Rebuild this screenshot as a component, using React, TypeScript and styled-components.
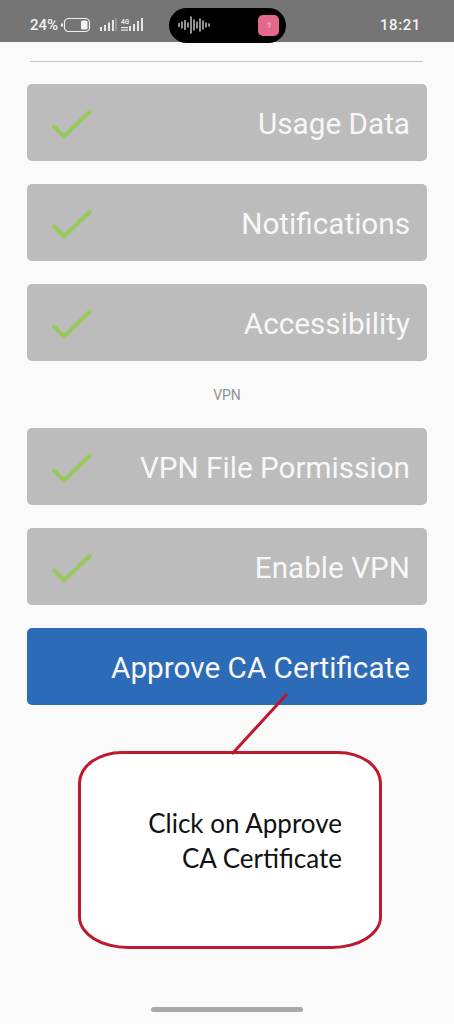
import React from 'react';
import styled, { createGlobalStyle } from 'styled-components';

const GlobalStyle = createGlobalStyle`
  html, body {
    margin: 0;
    padding: 0;
    background: #fafafa;
  }
`

const Page = styled.div`
  position: relative;
  width: 454px;
  height: 1024px;
  overflow: hidden;
  background: #fafafa;
  font-family: Roboto, "Liberation Sans", sans-serif;
`

const StatusBar = styled.div`
  box-sizing: border-box;
  height: 42px;
  background: #757575;
  display: flex;
  align-items: center;
  padding: 8px 33px 0 30px;
  color: #f2f2f2;
`

const BatteryText = styled.span`
  font-size: 15px;
  font-weight: 500;
  width: 30px;
`

const StatusIcons = styled.svg`
  display: block;
  flex: none;
`

const Island = styled.div`
  box-sizing: border-box;
  flex: none;
  width: 117px;
  height: 35px;
  margin-left: 19px;
  border-radius: 18px;
  background: #000;
  display: flex;
  align-items: center;
  justify-content: space-between;
  padding: 0 7px 0 9px;
`

const AppBadge = styled.div`
  width: 21px;
  height: 21px;
  border-radius: 5px;
  background: #e4688a;
  color: #f6d5de;
  font-size: 8px;
  display: flex;
  align-items: center;
  justify-content: center;
`

const Clock = styled.span`
  margin-left: auto;
  font-size: 15px;
  font-weight: 500;
  letter-spacing: 0.6px;
`

const Content = styled.div`
  padding: 19px 27px 0;
`

const Divider = styled.div`
  height: 1px;
  margin: 0 4px 22px 3px;
  background: #c9c9c9;
`

const Group = styled.div`
  display: flex;
  flex-direction: column;
  gap: 23px;
`

const StepButton = styled.div<{ $active?: boolean }>`
  box-sizing: border-box;
  height: 77px;
  border-radius: 5px;
  padding: 0 17px 0 24px;
  display: flex;
  align-items: center;
  justify-content: space-between;
  background: ${p => (p.$active ? '#2c6bb8' : '#bcbcbc')};
  color: #f7f7f7;
  font-size: 29.7px;
  white-space: nowrap;
`

const StepLabel = styled.span`
  padding-top: 2px;
`

const Spacer = styled.span``

const SectionLabel = styled.div`
  height: 67px;
  display: flex;
  align-items: center;
  justify-content: center;
  font-size: 14px;
  color: #949494;
`

const Callout = styled.div`
  position: relative;
  box-sizing: border-box;
  width: 304px;
  height: 198px;
  margin: 46px 0 0 51px;
  border: 3px solid #bd1a30;
  border-radius: 44px 44px 50px 50px / 32px;
  background: #fff;
  padding: 52px 37px 0 0;
  text-align: right;
  font-family: Lato, "Open Sans", sans-serif;
  font-size: 26px;
  line-height: 35px;
  color: #111;
`

const Leader = styled.svg`
  position: absolute;
  left: 149px;
  top: -62px;
`

const HomeBar = styled.div`
  position: absolute;
  left: 151px;
  bottom: 12px;
  width: 152px;
  height: 5px;
  border-radius: 3px;
  background: #a9a9a9;
`

function Check() {
  return (
    <svg width="42" height="32" viewBox="0 0 42 32">
      <path d="M2 18.5 L13 29.5 L40 3.5" fill="none" stroke="#97c95c" strokeWidth="4" />
    </svg>
  );
}

function App() {
  return (
    <Page>
      <GlobalStyle />
      <StatusBar>
        <BatteryText>24%</BatteryText>
        <StatusIcons width="90" height="20" viewBox="0 0 90 20">
          <rect x="1" y="8.5" width="2" height="3" fill="#eee" />
          <rect x="4.5" y="3.5" width="25" height="13" rx="4" fill="none" stroke="#eee" strokeWidth="1.2" />
          <rect x="21" y="5.5" width="6.5" height="9" rx="1.5" fill="#f4f4f4" />
          <g fill="#e6e6e6">
            <rect x="40" y="12" width="2" height="4" />
            <rect x="44" y="10" width="2" height="6" />
            <rect x="48" y="7.5" width="2" height="8.5" />
            <rect x="52" y="5" width="2" height="11" />
            <rect x="55.5" y="3" width="1" height="13" opacity="0.6" />
            <rect x="69" y="11" width="2" height="5" />
            <rect x="73" y="9" width="2" height="7" />
            <rect x="77" y="6" width="2" height="10" />
            <rect x="81" y="3" width="2" height="13" />
            <rect x="61" y="12" width="7" height="1.2" />
            <rect x="61" y="14.5" width="7" height="1.2" />
          </g>
          <text x="61" y="9" fontSize="6.5" fontWeight="700" fill="#e6e6e6" fontFamily="Roboto, sans-serif">4G</text>
        </StatusIcons>
        <Island>
          <svg width="32" height="18" viewBox="0 0 32 18">
            <g stroke="#e2e2e2" strokeWidth="1.3" strokeLinecap="round">
              <path d="M1 7.5V10.5M4 6V12M7 4.5V13.5M10 7V11M13 1V17M16 4V14M19 6V12M22 3V15M25 5V13M28 7V11M31 8V10" />
            </g>
          </svg>
          <AppBadge>ﾂ</AppBadge>
        </Island>
        <Clock>18:21</Clock>
      </StatusBar>
      <Content>
        <Divider />
        <Group>
          <StepButton><Check /><StepLabel>Usage Data</StepLabel></StepButton>
          <StepButton><Check /><StepLabel>Notifications</StepLabel></StepButton>
          <StepButton><Check /><StepLabel>Accessibility</StepLabel></StepButton>
        </Group>
        <SectionLabel>VPN</SectionLabel>
        <Group>
          <StepButton><Check /><StepLabel>VPN File Pormission</StepLabel></StepButton>
          <StepButton><Check /><StepLabel>Enable VPN</StepLabel></StepButton>
          <StepButton $active><Spacer /><StepLabel>Approve CA Certificate</StepLabel></StepButton>
        </Group>
        <Callout>
          <Leader width="60" height="64" viewBox="0 0 60 64">
            <path d="M2 62 L57 2" fill="none" stroke="#bd1a30" strokeWidth="3" />
          </Leader>
          Click on Approve<br />CA Certificate
        </Callout>
      </Content>
      <HomeBar />
    </Page>
  );
}

export default App;
